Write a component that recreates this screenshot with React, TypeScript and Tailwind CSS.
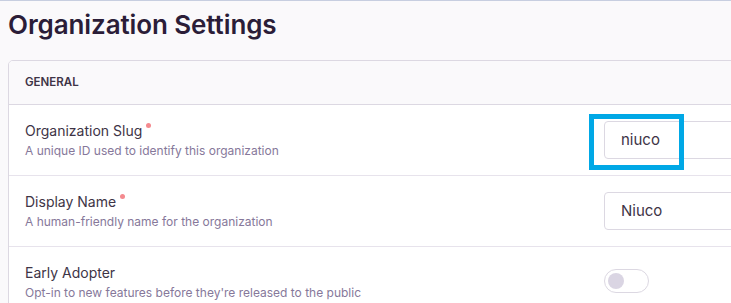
import React from 'react';

const ROWS = [
  {
    label: 'Organization Slug',
    help: 'A unique ID used to identify this organization',
    required: true,
    value: 'niuco',
    kind: 'input'
  },
  {
    label: 'Display Name',
    help: 'A human-friendly name for the organization',
    required: true,
    value: 'Niuco',
    kind: 'input'
  },
  {
    label: 'Early Adopter',
    help: "Opt-in to new features before they're released to the public",
    required: false,
    value: '',
    kind: 'toggle'
  }
];

export default function App() {
  return (
    <div
      className="relative h-[303px] w-[731px] overflow-hidden border-t border-[#c7cee0] bg-[#faf9fb] text-[#2b1d38]"
      style={{ fontFamily: 'Inter, "Noto Sans", sans-serif' }}
    >
      <div className="w-[900px] pl-2">
        <h1 className="pt-[6px] text-[26px] font-semibold leading-[36px] tracking-[-0.1px] text-[#2b1d38]">
          Organization Settings
        </h1>
        <div className="mt-[17px] overflow-hidden rounded-t-[5px] border border-[#dcd8e2]">
          <div className="flex h-[44px] items-center border-b border-[#dcd8e2] bg-[#faf9fb] px-4 text-[11.5px] font-semibold uppercase text-[#3e3446]">
            General
          </div>
          {ROWS.map((row, i) => (
            <div
              key={row.label}
              className={`grid grid-cols-[579px_1fr] bg-white py-4 pl-4 ${
                i < ROWS.length - 1 ? 'border-b border-[#e7e3ec]' : ''
              }`}
            >
              <div className="flex flex-col">
                <div className="flex items-start text-[14px] leading-[20px] text-[#3e3446]">
                  {row.label}
                  {row.required && (
                    <span className="ml-[4px] mt-[2px] h-[5px] w-[5px] rounded-full bg-[#f48a8f]" />
                  )}
                </div>
                <div className="mt-[2px] text-[12px] leading-[16px] text-[#86789a]">
                  {row.help}
                </div>
              </div>
              {row.kind === 'input' ? (
                <div className="flex h-[38px] items-center rounded-[4px] border border-[#dcd8e2] bg-white px-4 text-[15px] text-[#3e3446]">
                  {row.value}
                </div>
              ) : (
                <div className="mt-[6px] flex h-[24px] w-[45px] items-center rounded-full border border-[#dcd8e2] bg-white px-[3px]">
                  <span className="h-[16px] w-[16px] rounded-full bg-[#dad5e3]" />
                </div>
              )}
            </div>
          ))}
        </div>
      </div>
      <div className="absolute left-[589px] top-[113px] h-[56px] w-[95px] border-[5px] border-[#00a8e6]" />
    </div>
  );
}
